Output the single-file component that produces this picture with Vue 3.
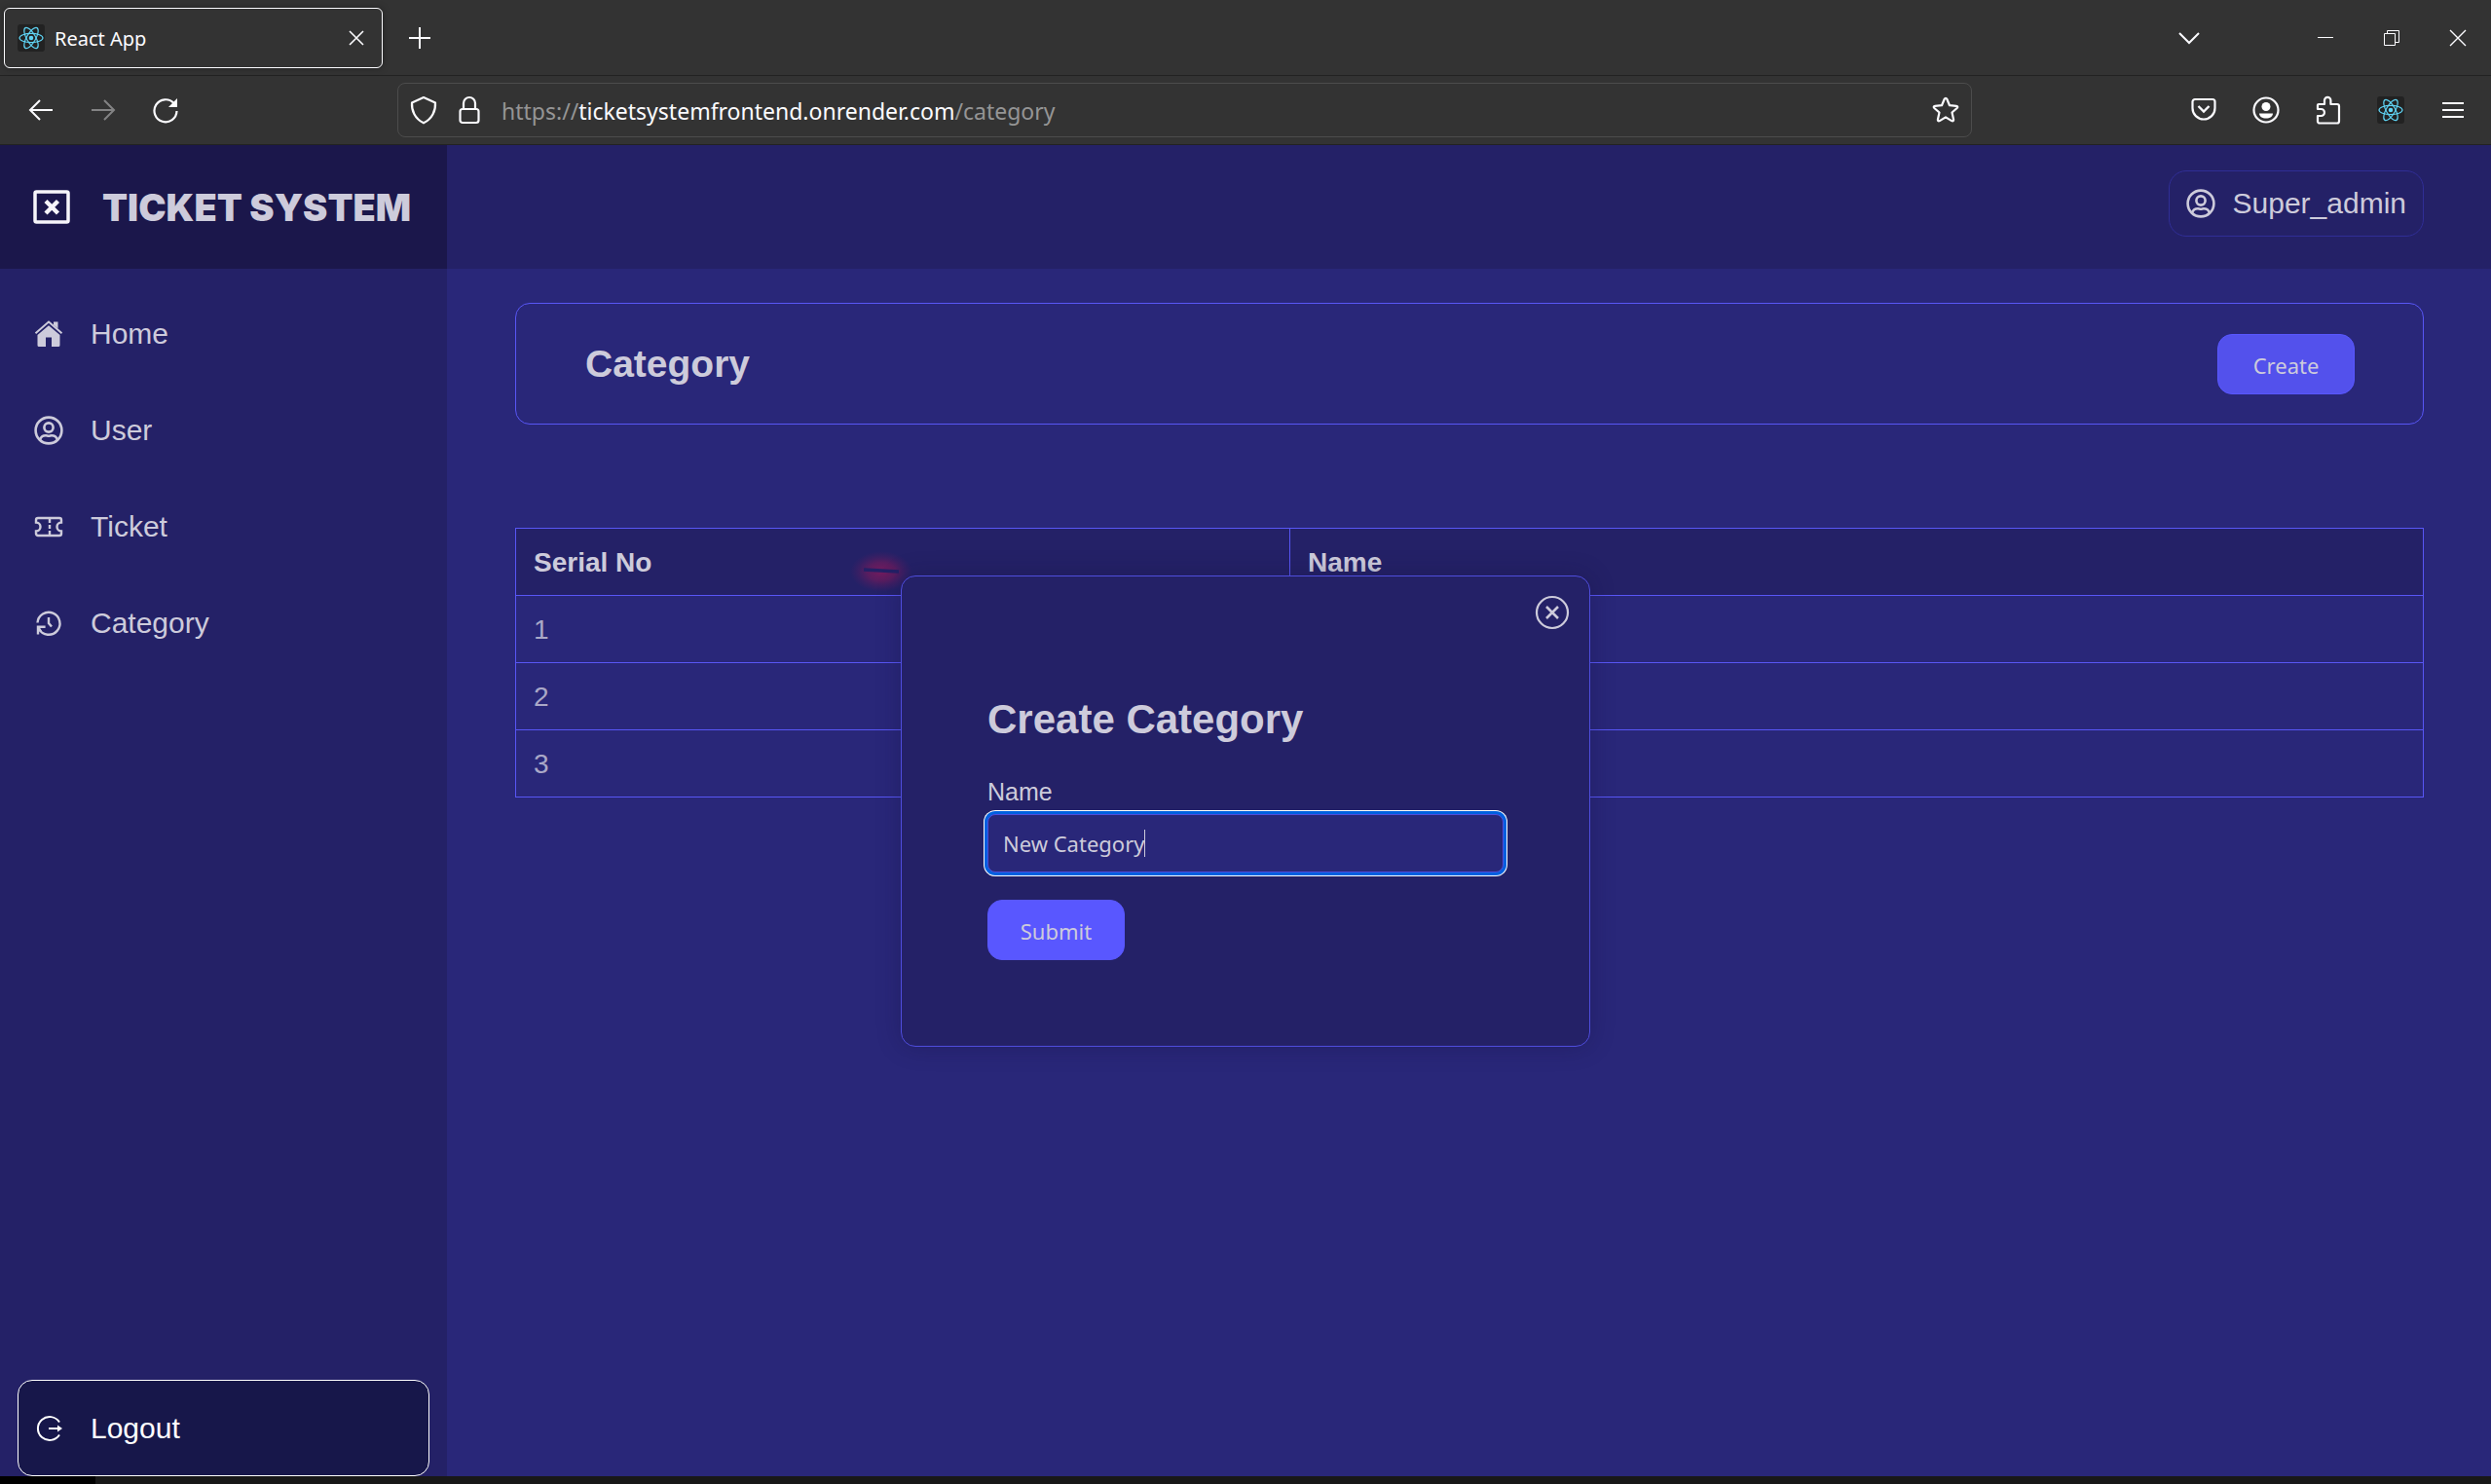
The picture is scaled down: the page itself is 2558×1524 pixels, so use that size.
<script setup>
import { ref } from 'vue'

const navItems = [
  { label: 'Home', icon: 'home' },
  { label: 'User', icon: 'user' },
  { label: 'Ticket', icon: 'ticket' },
  { label: 'Category', icon: 'history' },
]
const rows = [1, 2, 3]
const name = ref('New Category')
</script>

<template>
  <div class="window">
    <svg class="defs" aria-hidden="true">
      <symbol id="react" viewBox="0 0 28 28">
        <rect width="28" height="28" rx="3" fill="#222" />
        <g fill="none" stroke="#5fd3f3" stroke-width="1.2">
          <ellipse cx="14" cy="14" rx="12" ry="4.6" />
          <ellipse cx="14" cy="14" rx="12" ry="4.6" transform="rotate(60 14 14)" />
          <ellipse cx="14" cy="14" rx="12" ry="4.6" transform="rotate(120 14 14)" />
        </g>
        <circle cx="14" cy="14" r="2.3" fill="#5fd3f3" />
      </symbol>
      <symbol id="user" viewBox="0 0 30 30">
        <g fill="none" stroke="currentColor" stroke-width="2.6">
          <circle cx="15" cy="15" r="13.4" />
          <circle cx="15" cy="12" r="4.6" />
          <path d="M6 24.5c1-3 3.500-4.300 6-4.300 1.300 0 1.700.5 3 .5s1.700-.5 3-.5c2.500 0 5 1.300 6 4.300" />
        </g>
      </symbol>
      <symbol id="home" viewBox="0 0 30 30">
        <path d="M1.500 14.200 15 2.600l13.500 11.600" fill="none" stroke="currentColor" stroke-width="2" />
        <path d="M20 2.500h4.500v7L20 5.800z" fill="currentColor" />
        <path d="M15 6.200 26.500 16v10.500a1.500 1.500 0 0 1-1.500 1.500h-7V18.500h-6V28H5a1.500 1.500 0 0 1-1.500-1.500V16z" fill="currentColor" />
      </symbol>
      <symbol id="ticket" viewBox="0 0 30 30">
        <g fill="none" stroke="currentColor" stroke-width="2.400">
          <path d="M4 6h22a2 2 0 0 1 2 2v2.500a4.500 4.500 0 0 0 0 9V22a2 2 0 0 1-2 2H4a2 2 0 0 1-2-2v-2.500a4.500 4.500 0 0 0 0-9V8a2 2 0 0 1 2-2z" />
          <path d="M16 6v5M16 13v4M16 19v5" />
        </g>
      </symbol>
      <symbol id="history" viewBox="0 0 30 30">
        <g fill="none" stroke="currentColor" stroke-width="2.400">
          <path d="M3.500 14.500A11.500 11.500 0 1 1 5 21" />
          <path d="M4 26.500V18.800h7.600M4 18.800l3 4.500" />
          <path d="M15 9v6l3 3.600" />
        </g>
      </symbol>
      <symbol id="logout" viewBox="0 0 30 30">
        <path d="M26 8.500A12 12 0 1 0 26 21.500" fill="none" stroke="currentColor" stroke-width="2" />
        <path d="M15 15h10" stroke="currentColor" stroke-width="2" />
        <path d="M24 11.500v7l5-3.500z" fill="currentColor" />
      </symbol>
    </svg>

    <header class="chrome">
      <div class="tabbar">
        <div class="tab">
          <svg class="i28"><use href="#react" /></svg>
          <span class="tab-title">React App</span>
          <button class="ghost" aria-label="Close tab">
            <svg width="16" height="16" viewBox="0 0 16 16" class="line"><path d="M1 1l14 14M15 1 1 15" stroke-width="1.600" /></svg>
          </button>
        </div>
        <button class="ghost slot" aria-label="New tab">
          <svg width="22" height="22" viewBox="0 0 22 22" class="line"><path d="M11 0v22M0 11h22" stroke-width="2" /></svg>
        </button>
        <div class="grow"></div>
        <button class="ghost slot tabs-list" aria-label="List all tabs">
          <svg width="24" height="14" viewBox="0 0 24 14" class="line"><path d="M2 2l10 10L22 2" stroke-width="2" /></svg>
        </button>
        <button class="ghost winbtn" aria-label="Minimize">
          <svg width="16" height="16" viewBox="0 0 16 16" class="line"><path d="M0 7.500h16" stroke-width="1" /></svg>
        </button>
        <button class="ghost winbtn" aria-label="Restore">
          <svg width="16" height="16" viewBox="0 0 16 16" class="line"><path d="M.5 3.500h11v12H.5zM3.500 3.500v-3h12v12h-4" stroke-width="1" /></svg>
        </button>
        <button class="ghost winbtn" aria-label="Close window">
          <svg width="18" height="18" viewBox="0 0 18 18" class="line"><path d="M1 1l16 16M17 1 1 17" stroke-width="1.400" /></svg>
        </button>
      </div>
      <div class="toolbar">
        <button class="ghost slot" aria-label="Back">
          <svg width="26" height="24" viewBox="0 0 26 24" class="line"><path d="M2 12h23M12 2 2 12l10 10" stroke-width="2" /></svg>
        </button>
        <button class="ghost slot dim" aria-label="Forward">
          <svg width="26" height="24" viewBox="0 0 26 24" class="line"><path d="M24 12H1M14 2l10 10-10 10" stroke-width="2" /></svg>
        </button>
        <button class="ghost slot" aria-label="Reload">
          <svg width="28" height="28" viewBox="0 0 28 28" class="line"><path d="M22.500 7A11.500 11.500 0 1 0 25.500 15" stroke-width="2.200" /><path d="M26 2v9h-9z" fill="#fff" stroke="none" /></svg>
        </button>
        <div class="urlbar">
          <svg width="28" height="30" viewBox="0 0 28 30" class="line"><path d="M14 2 26 7.500c.5 8-3 16.500-12 20.800C5 24 1.500 15.500 2 7.500z" stroke-width="2.200" stroke-linejoin="round" /></svg>
          <svg width="22" height="30" viewBox="0 0 22 30" class="line"><rect x="1.500" y="14" width="19" height="14" rx="2.500" stroke-width="2.200" /><path d="M5 14V8a6 6 0 0 1 12 0v6" stroke-width="2.200" /></svg>
          <div class="url" role="textbox" aria-label="Address">https://<b>ticketsystemfrontend.onrender.com</b>/category</div>
          <svg width="28" height="28" viewBox="0 0 28 28" class="line"><path d="M14 1.800c.7 0 1 .4 1.300 1l2.700 6.400 6.900.6c1.500.2 1.800 1.300.8 2.200l-5.200 4.500 1.600 7.200c.2 1.500-.7 2.100-1.900 1.400L14 21.400l-6.200 3.700c-1.200.7-2.100.1-1.900-1.400l1.600-7.200L2.300 12c-1-.9-.7-2 .8-2.200l6.900-.6 2.700-6.400c.3-.6.600-1 1.300-1z" stroke-width="2.200" stroke-linejoin="round" /></svg>
        </div>
        <button class="ghost slot" aria-label="Save to Pocket">
          <svg width="26" height="28" viewBox="0 0 26 28" class="line"><path d="M4 3h18a2.500 2.500 0 0 1 2.500 2.500V12a11.500 11.500 0 0 1-23 0V5.500A2.500 2.500 0 0 1 4 3z" stroke-width="2.200" /><path d="M7.500 10l5.500 5.500 5.500-5.500" stroke-width="2.400" /></svg>
        </button>
        <button class="ghost slot" aria-label="Account">
          <svg width="28" height="28" viewBox="0 0 28 28" class="line"><circle cx="14" cy="14" r="12.500" stroke-width="2.200" /><circle cx="14" cy="10.500" r="4.500" fill="#fff" stroke="none" /><path d="M7 17.500h14c0 3-3 5-7 5s-7-2-7-5z" fill="#fff" stroke="none" /></svg>
        </button>
        <button class="ghost slot" aria-label="Extensions">
          <svg width="26" height="30" viewBox="0 0 26 30" class="line"><path d="M3 9h6V5a3.200 3.200 0 0 1 6.400 0v4H22a2 2 0 0 1 2 2v15.500a2 2 0 0 1-2 2H4a2 2 0 0 1-2-2V21h3.500a3.500 3.500 0 0 0 0-7H2V10a1 1 0 0 1 1-1z" stroke-width="2.200" stroke-linejoin="round" /></svg>
        </button>
        <button class="ghost slot" aria-label="React developer tools"><svg class="i28"><use href="#react" /></svg></button>
        <button class="ghost slot" aria-label="Menu">
          <svg width="22" height="18" viewBox="0 0 22 18" class="line"><path d="M0 2h22M0 9h22M0 16h22" stroke-width="2.200" /></svg>
        </button>
      </div>
    </header>

    <div class="app">
      <aside class="sidebar">
        <div class="brand">
          <svg width="38" height="36" viewBox="0 0 38 36"><rect x="2" y="2" width="34" height="31" rx="1.500" fill="none" stroke="#f6f5fa" stroke-width="3.500" /><path d="M13 11.500 25.500 24M25.500 11.500 13 24" stroke="#f6f5fa" stroke-width="4.400" /></svg>
          <span>TICKET SYSTEM</span>
        </div>
        <nav class="nav">
          <a v-for="item in navItems" :key="item.label" href="#" class="nav-item">
            <svg class="i30"><use :href="'#' + item.icon" /></svg>{{ item.label }}
          </a>
        </nav>
        <a href="#" class="nav-item logout"><svg class="i30"><use href="#logout" /></svg>Logout</a>
      </aside>

      <section class="main">
        <div class="topbar">
          <button class="profile"><svg class="i30"><use href="#user" /></svg>Super_admin</button>
        </div>
        <main class="content">
          <div class="card">
            <h1>Category</h1>
            <button class="btn btn-create">Create</button>
          </div>
          <table class="table">
            <colgroup><col class="col-serial" /><col /></colgroup>
            <thead>
              <tr><th scope="col">Serial No</th><th scope="col">Name</th></tr>
            </thead>
            <tbody>
              <tr v-for="row in rows" :key="row"><td>{{ row }}</td><td></td></tr>
            </tbody>
          </table>
        </main>
      </section>

      <div class="overlay">
        <form class="modal" role="dialog" aria-labelledby="modal-title" @submit.prevent>
          <svg class="glow" width="72" height="48" viewBox="0 0 72 48" aria-hidden="true">
            <defs><radialGradient id="red"><stop offset="0" stop-color="#741a5e" /><stop offset=".45" stop-color="#611c5e" stop-opacity=".85" /><stop offset="1" stop-color="#4a1d62" stop-opacity="0" /></radialGradient></defs>
            <ellipse cx="36" cy="24" rx="32" ry="21" fill="url(#red)" />
            <path d="M18 22l36 2" stroke="#232066" stroke-width="3.500" />
          </svg>
          <button type="button" class="ghost close" aria-label="Close dialog">
            <svg width="36" height="36" viewBox="0 0 36 36"><g fill="none" stroke="currentColor"><circle cx="18" cy="18" r="16" stroke-width="2.200" /><path d="M12 12l12 12M24 12 12 24" stroke-width="2.600" /></g></svg>
          </button>
          <h2 id="modal-title">Create Category</h2>
          <label for="category-name">Name</label>
          <div class="field">
            <input id="category-name" v-model="name" type="text" autocomplete="off" />
            <span class="caret"></span>
          </div>
          <button type="submit" class="btn">Submit</button>
        </form>
      </div>
    </div>
    <footer class="taskbar"><span class="taskbar-start"></span></footer>
  </div>
</template>

<style>
body { background: #292779; }
</style>

<style scoped>
* { box-sizing: border-box; }
.window {
  min-height: 100vh;
  display: flex;
  flex-direction: column;
  font-family: "Liberation Sans", Arial, sans-serif;
  color: #cdcbdb;
}
svg { display: block; flex: none; }
.defs { position: absolute; width: 0; height: 0; }
.i28 { width: 28px; height: 28px; }
.i30 { width: 30px; height: 30px; }
.line { fill: none; stroke: #fbfbfe; }
.grow { flex: 1; }
.ghost {
  display: flex;
  align-items: center;
  justify-content: center;
  padding: 0;
  border: 0;
  background: none;
  color: inherit;
}
.slot { width: 64px; height: 64px; }
.winbtn { width: 68px; height: 64px; }
.dim { opacity: .4; }

.chrome { background: #333; color: #fbfbfe; font-family: "Noto Sans", sans-serif; }
.tabbar {
  height: 78px;
  display: flex;
  align-items: center;
  padding-left: 4px;
  border-bottom: 1px solid #222;
}
.tab {
  width: 389px;
  height: 62px;
  display: flex;
  align-items: center;
  gap: 10px;
  padding: 0 18px 0 13px;
  margin-right: 6px;
  border: 1px solid #fbfbfe;
  border-radius: 6px;
  box-shadow: 0 0 6px #222;
}
.tab-title { flex: 1; padding-top: 2px; font-size: 20px; line-height: 28px; }
.tabs-list { margin-right: 74px; }
.toolbar {
  height: 71px;
  display: flex;
  align-items: center;
  padding: 0 7px 0 10px;
  border-bottom: 1px solid #222;
}
.urlbar {
  flex: 1;
  height: 56px;
  display: flex;
  align-items: center;
  margin: 0 206px;
  padding: 0 12px;
  border: 1px solid #4c4c4c;
  border-radius: 8px;
  gap: 22px;
}
.url { flex: 1; padding-top: 2px; font-size: 23px; line-height: 30px; color: #959595; }
.url b { font-weight: 400; color: #fbfbfe; }

.app { position: relative; flex: 1; display: flex; background: #292779; }
.sidebar {
  width: 459px;
  flex: none;
  display: flex;
  flex-direction: column;
  background: #242167;
}
.brand {
  height: 127px;
  display: flex;
  align-items: center;
  gap: 33px;
  padding-left: 34px;
  background: #1b174b;
  font-family: Inter, sans-serif;
  font-weight: 900;
  font-size: 38px;
  white-space: nowrap;
}
.nav { flex: 1; padding-top: 17px; }
.nav-item {
  height: 99px;
  display: flex;
  align-items: center;
  gap: 28px;
  margin: 0 18px;
  padding: 0 16px;
  border: 1px solid transparent;
  border-radius: 15px;
  font-size: 30px;
  color: inherit;
  text-decoration: none;
}
.logout { border-color: #fff; background: #17174a; color: #fff; }
.main { flex: 1; min-width: 0; }
.topbar {
  height: 127px;
  display: flex;
  align-items: center;
  justify-content: flex-end;
  padding: 0 69px 8px;
  background: #242167;
}
.profile {
  height: 68px;
  display: flex;
  align-items: center;
  gap: 18px;
  padding: 0 17px;
  border: 1px solid #302e96;
  border-radius: 18px;
  background: none;
  color: inherit;
  font: 30px "Liberation Sans", Arial, sans-serif;
}
.content { padding: 35px 69px 0 70px; }
.card {
  height: 125px;
  display: flex;
  align-items: center;
  justify-content: space-between;
  padding: 0 70px 0 71px;
  margin-bottom: 106px;
  border: 1px solid #5856f5;
  border-radius: 15px;
}
h1 { margin: 0; font-size: 39px; }
.btn {
  width: 141px;
  height: 62px;
  padding: 2px 0 0;
  border: 1px solid #5957ff;
  border-radius: 15px;
  background: #5957ff;
  color: #cdcbdb;
  font: 22px "Noto Sans", sans-serif;
}
.btn-create { background: #5351ec; }
.table {
  width: 100%;
  border-collapse: collapse;
  table-layout: fixed;
  font-size: 28px;
}
.col-serial { width: 795px; }
.table th, .table td {
  height: 69px;
  padding: 2px 18px 0;
  border: 1px solid #5856f5;
  text-align: left;
}
.table th { background: #242167; }
.table td { color: #aaa8c7; }

.overlay {
  position: absolute;
  inset: 0;
  z-index: 1;
  display: flex;
  align-items: center;
  justify-content: center;
}
.modal {
  position: relative;
  width: 708px;
  padding: 124px 88px 88px;
  border: 1px solid #4f4ddc;
  border-radius: 15px;
  background: #242167;
  box-shadow: 0 0 24px rgba(20, 18, 60, .3);
}
.glow { position: absolute; left: -57px; top: -29px; z-index: -1; }
.close { position: absolute; right: 20px; top: 19px; }
h2 { margin: 0 0 37px; font-size: 42px; line-height: 46px; }
label { display: block; font-size: 25px; line-height: 28px; margin-bottom: 9px; }
.field { position: relative; margin-bottom: 28px; }
input {
  display: block;
  width: 100%;
  height: 60px;
  padding: 0 15px;
  border: 1px solid #4f4ddc;
  border-radius: 8px;
  outline: 0;
  background: #292779;
  box-shadow: 0 0 0 3px #0060df, 0 0 0 4px #fff;
  color: #cdcbdb;
  font: 22px "Noto Sans", sans-serif;
}
.caret { position: absolute; left: 161px; top: 16px; width: 1px; height: 28px; background: #cdcbdb; }
.taskbar { height: 8px; background: #181818; }
.taskbar-start { display: block; width: 98px; height: 8px; background: #000; }
</style>
